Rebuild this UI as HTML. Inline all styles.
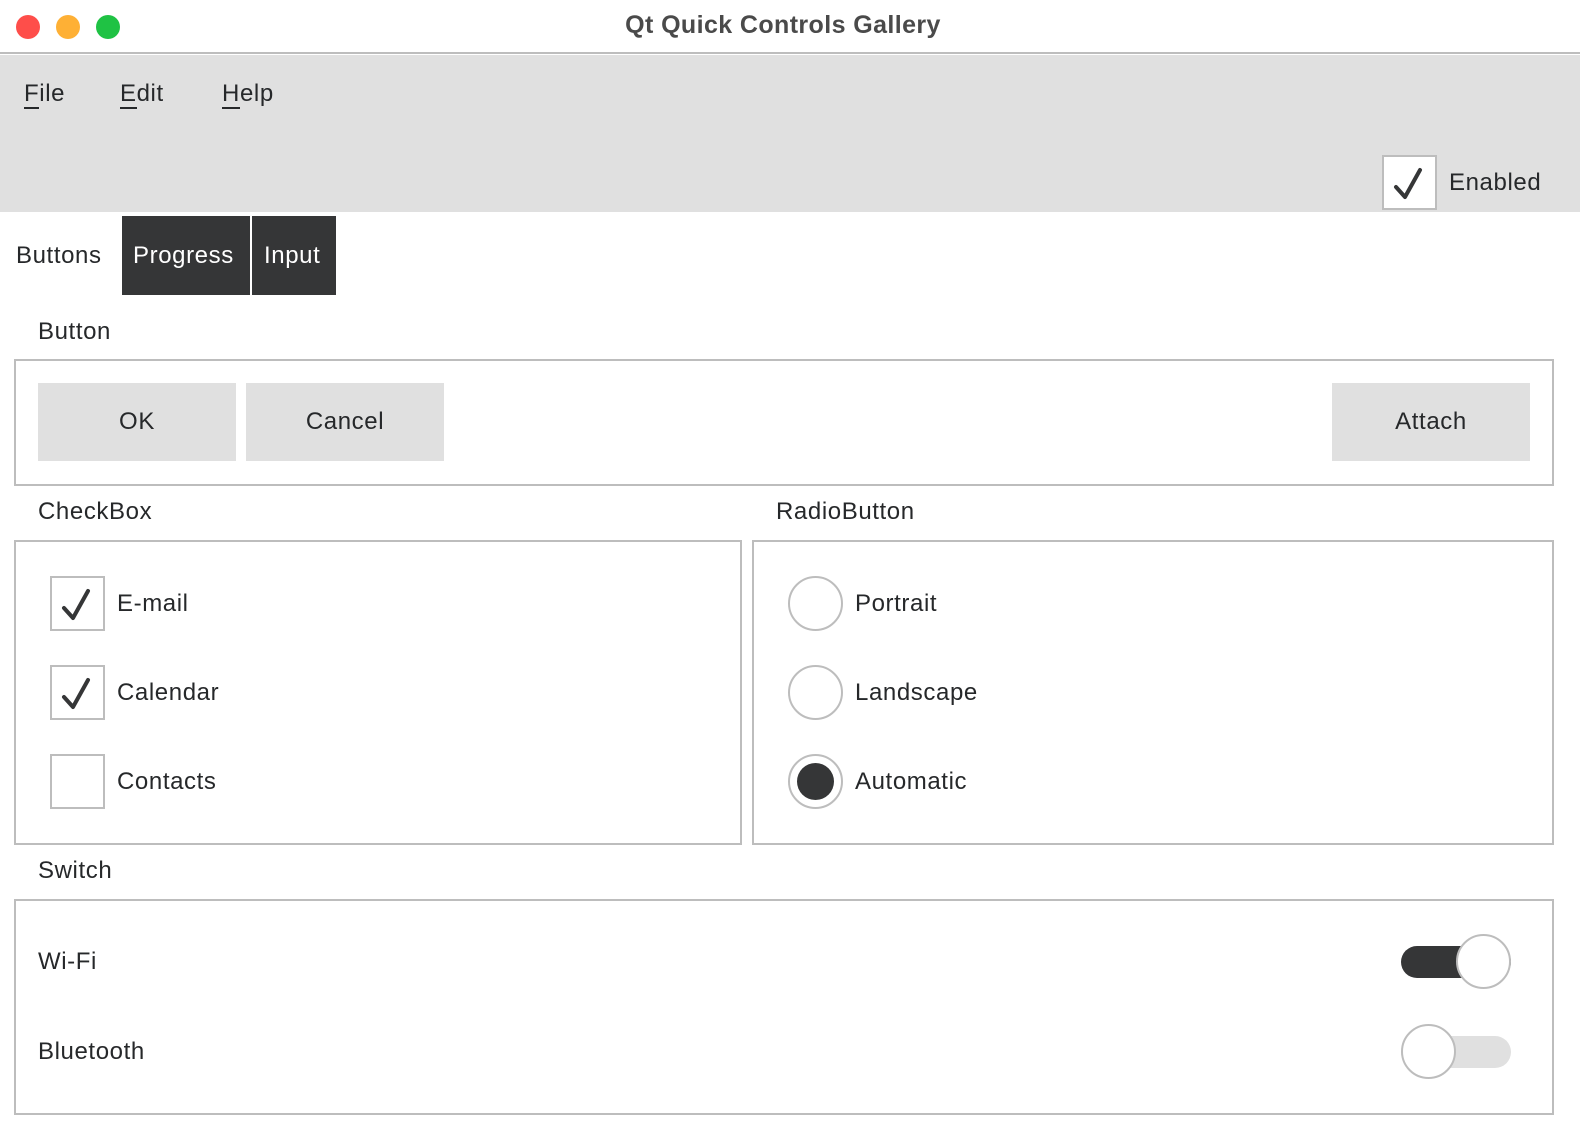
<!DOCTYPE html>
<html><head><meta charset="utf-8"><style>
*{margin:0;padding:0;box-sizing:border-box}
body{width:1580px;height:1138px;background:#fff;font-family:"Liberation Sans",sans-serif;color:#26282a;position:relative;overflow:hidden}
.a{position:absolute}
.t{font-size:24px;line-height:28px;white-space:nowrap;letter-spacing:0.6px}
.frame{position:absolute;border:2px solid #bdbdbd}
.btn{position:absolute;background:#e0e0e0;font-size:24px;letter-spacing:0.6px;display:flex;align-items:center;justify-content:center;height:78px;width:198px;top:383px}
.cb{position:absolute;width:55px;height:55px;border:2px solid #bdbdbd;background:#fff}
.rb{position:absolute;width:55px;height:55px;border:2px solid #bdbdbd;border-radius:50%;background:#fff}
u{text-decoration:none;border-bottom:2px solid #26282a}
</style></head><body>
<div class="a" style="left:0;top:0;width:1580px;height:54px;background:#fff;border-bottom:2px solid #bdbdbd"></div>
<div class="a" style="left:16px;top:15px;width:24px;height:24px;border-radius:50%;background:#fe4e4a"></div>
<div class="a" style="left:56px;top:15px;width:24px;height:24px;border-radius:50%;background:#feb035"></div>
<div class="a" style="left:96px;top:15px;width:24px;height:24px;border-radius:50%;background:#1fc244"></div>
<div class="a t" style="left:0;width:1566px;top:11px;text-align:center;font-weight:bold;font-size:25px;color:#4a4a4a;letter-spacing:0.4px">Qt Quick Controls Gallery</div>
<div class="a" style="left:0;top:55px;width:1580px;height:157px;background:#e0e0e0"></div>
<div class="a t" style="left:24px;top:80px"><u>F</u>ile</div>
<div class="a t" style="left:120px;top:80px"><u>E</u>dit</div>
<div class="a t" style="left:222px;top:80px"><u>H</u>elp</div>
<div class="cb" style="left:1382px;top:155px"><svg width="51" height="51"><path d="M12 30 L21 40 L36 13" stroke="#353637" stroke-width="4" fill="none" stroke-linecap="round" stroke-linejoin="round"/></svg></div>
<div class="a t" style="left:1449px;top:169px">Enabled</div>
<div class="a t" style="left:16px;top:242px">Buttons</div>
<div class="a" style="left:122px;top:216px;width:128px;height:79px;background:#353637"></div>
<div class="a t" style="left:133px;top:242px;color:#fff">Progress</div>
<div class="a" style="left:252px;top:216px;width:84px;height:79px;background:#353637"></div>
<div class="a t" style="left:264px;top:242px;color:#fff">Input</div>

<div class="a t" style="left:38px;top:318px">Button</div>
<div class="frame" style="left:14px;top:359px;width:1540px;height:127px"></div>
<div class="btn" style="left:38px">OK</div>
<div class="btn" style="left:246px">Cancel</div>
<div class="btn" style="left:1332px">Attach</div>

<div class="a t" style="left:38px;top:498px">CheckBox</div>
<div class="a t" style="left:776px;top:498px">RadioButton</div>
<div class="frame" style="left:14px;top:540px;width:728px;height:305px"></div>
<div class="frame" style="left:752px;top:540px;width:802px;height:305px"></div>
<div class="cb" style="left:50px;top:576px"><svg width="51" height="51"><path d="M12 30 L21 40 L36 13" stroke="#353637" stroke-width="4" fill="none" stroke-linecap="round" stroke-linejoin="round"/></svg></div>
<div class="a t" style="left:117px;top:590px">E-mail</div>
<div class="cb" style="left:50px;top:665px"><svg width="51" height="51"><path d="M12 30 L21 40 L36 13" stroke="#353637" stroke-width="4" fill="none" stroke-linecap="round" stroke-linejoin="round"/></svg></div>
<div class="a t" style="left:117px;top:679px">Calendar</div>
<div class="cb" style="left:50px;top:754px"></div>
<div class="a t" style="left:117px;top:768px">Contacts</div>
<div class="rb" style="left:788px;top:576px"></div>
<div class="a t" style="left:855px;top:590px">Portrait</div>
<div class="rb" style="left:788px;top:665px"></div>
<div class="a t" style="left:855px;top:679px">Landscape</div>
<div class="rb" style="left:788px;top:754px"><div class="a" style="left:7px;top:7px;width:37px;height:37px;border-radius:50%;background:#353637"></div></div>
<div class="a t" style="left:855px;top:768px">Automatic</div>

<div class="a t" style="left:38px;top:857px">Switch</div>
<div class="frame" style="left:14px;top:899px;width:1540px;height:216px"></div>
<div class="a t" style="left:38px;top:948px">Wi-Fi</div>
<div class="a" style="left:1401px;top:946px;width:110px;height:32px;border-radius:16px;background:#353637"></div>
<div class="rb" style="left:1456px;top:934px"></div>
<div class="a t" style="left:38px;top:1038px">Bluetooth</div>
<div class="a" style="left:1401px;top:1036px;width:110px;height:32px;border-radius:16px;background:#e0e0e0"></div>
<div class="rb" style="left:1401px;top:1024px"></div>
</body></html>
